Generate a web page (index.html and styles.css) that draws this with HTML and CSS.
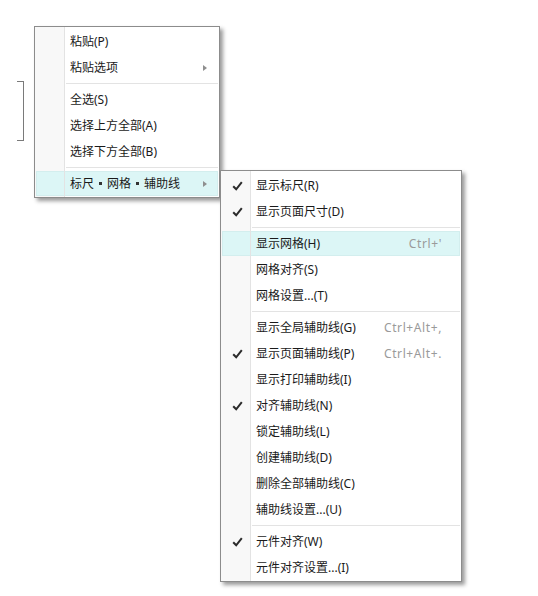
FILE: index.html
```html
<!DOCTYPE html>
<html lang="zh-CN">
<head>
<meta charset="utf-8">
<title>Context menu</title>
<link rel="stylesheet" href="styles.css">
</head>
<body>
<div class="canvas">
  <div class="bracket"></div>

  <div class="menu menu-main">
    <div class="item"><span class="label">粘贴(P)</span></div>
    <div class="item"><span class="label">粘贴选项</span><span class="arrow"></span></div>
    <div class="sep"></div>
    <div class="item"><span class="label">全选(S)</span></div>
    <div class="item"><span class="label">选择上方全部(A)</span></div>
    <div class="item"><span class="label">选择下方全部(B)</span></div>
    <div class="sep"></div>
    <div class="item active"><span class="label">标尺<span class="dot"></span>网格<span class="dot"></span>辅助线</span><span class="arrow"></span></div>
  </div>

  <div class="menu menu-sub">
    <div class="item checked"><span class="check"><svg width="11" height="10" viewBox="0 0 11 10"><path d="M1.2 5.2 L4.2 8.3 L9.8 1.2" fill="none" stroke="#2b2b2b" stroke-width="2"/></svg></span><span class="label">显示标尺(R)</span></div>
    <div class="item checked"><span class="check"><svg width="11" height="10" viewBox="0 0 11 10"><path d="M1.2 5.2 L4.2 8.3 L9.8 1.2" fill="none" stroke="#2b2b2b" stroke-width="2"/></svg></span><span class="label">显示页面尺寸(D)</span></div>
    <div class="sep"></div>
    <div class="item active"><span class="label">显示网格(H)</span><span class="key">Ctrl+'</span></div>
    <div class="item"><span class="label">网格对齐(S)</span></div>
    <div class="item"><span class="label">网格设置...(T)</span></div>
    <div class="sep"></div>
    <div class="item"><span class="label">显示全局辅助线(G)</span><span class="key">Ctrl+Alt+,</span></div>
    <div class="item checked"><span class="check"><svg width="11" height="10" viewBox="0 0 11 10"><path d="M1.2 5.2 L4.2 8.3 L9.8 1.2" fill="none" stroke="#2b2b2b" stroke-width="2"/></svg></span><span class="label">显示页面辅助线(P)</span><span class="key">Ctrl+Alt+.</span></div>
    <div class="item"><span class="label">显示打印辅助线(I)</span></div>
    <div class="item checked"><span class="check"><svg width="11" height="10" viewBox="0 0 11 10"><path d="M1.2 5.2 L4.2 8.3 L9.8 1.2" fill="none" stroke="#2b2b2b" stroke-width="2"/></svg></span><span class="label">对齐辅助线(N)</span></div>
    <div class="item"><span class="label">锁定辅助线(L)</span></div>
    <div class="item"><span class="label">创建辅助线(D)</span></div>
    <div class="item"><span class="label">删除全部辅助线(C)</span></div>
    <div class="item"><span class="label">辅助线设置...(U)</span></div>
    <div class="sep"></div>
    <div class="item checked"><span class="check"><svg width="11" height="10" viewBox="0 0 11 10"><path d="M1.2 5.2 L4.2 8.3 L9.8 1.2" fill="none" stroke="#2b2b2b" stroke-width="2"/></svg></span><span class="label">元件对齐(W)</span></div>
    <div class="item"><span class="label">元件对齐设置...(I)</span></div>
  </div>
</div>
</body>
</html>
```

FILE: styles.css
```css
* { box-sizing: border-box; }

html, body {
  margin: 0;
  padding: 0;
  background: #ffffff;
}

body {
  font-family: "Noto Sans", "Noto Sans CJK SC", sans-serif;
  font-size: 12px;
  color: #1a1a1a;
}

.canvas {
  position: relative;
  width: 538px;
  height: 596px;
}

.bracket {
  position: absolute;
  left: 17px;
  top: 81px;
  width: 7px;
  height: 60px;
  border: 1px solid #7a7a7a;
  border-left: none;
}

.menu {
  position: absolute;
  display: flex;
  flex-direction: column;
  background: linear-gradient(to right, #f8f8f8 0, #f8f8f8 29px, #ffffff 29px) padding-box;
  border: 1px solid #8c8c8c;
  box-shadow: 3px 3px 4px rgba(0, 0, 0, 0.4);
  padding: 2px 1px 0 1px;
}

.menu::before {
  content: "";
  position: absolute;
  left: 29px;
  top: 0;
  bottom: 0;
  width: 1px;
  background: #e3e3e3;
  z-index: 2;
}

.menu-main {
  left: 34px;
  top: 26px;
  width: 186px;
}

.menu-sub {
  left: 220px;
  top: 170px;
  width: 242px;
}

.item {
  position: relative;
  display: flex;
  align-items: center;
  height: 25px;
  margin-bottom: 1px;
  padding-left: 34px;
  padding-right: 19px;
  white-space: nowrap;
  flex: none;
}

.item.active {
  background: #dcf6f6;
  box-shadow: inset 0 0 0 1px #d3eeee;
}

.label {
  flex: 1;
  display: flex;
  align-items: center;
  line-height: 25px;
}

.dot {
  display: inline-block;
  width: 3px;
  height: 3px;
  background: #333333;
  margin: 0 5px;
}

.key {
  color: #9a9a9a;
  font-family: "Noto Sans", sans-serif;
  letter-spacing: 0.6px;
  margin-right: -1px;
}

.arrow {
  width: 0;
  height: 0;
  border-top: 3.5px solid transparent;
  border-bottom: 3.5px solid transparent;
  border-left: 4px solid #8f8f8f;
  margin-right: -8px;
}

.check {
  position: absolute;
  left: 10px;
  top: 8px;
  width: 11px;
  height: 10px;
  display: block;
}

.check svg {
  display: block;
}

.sep {
  flex: none;
  height: 1px;
  margin: 2px 0 3px 30px;
  background: #e3e3e3;
}
```
